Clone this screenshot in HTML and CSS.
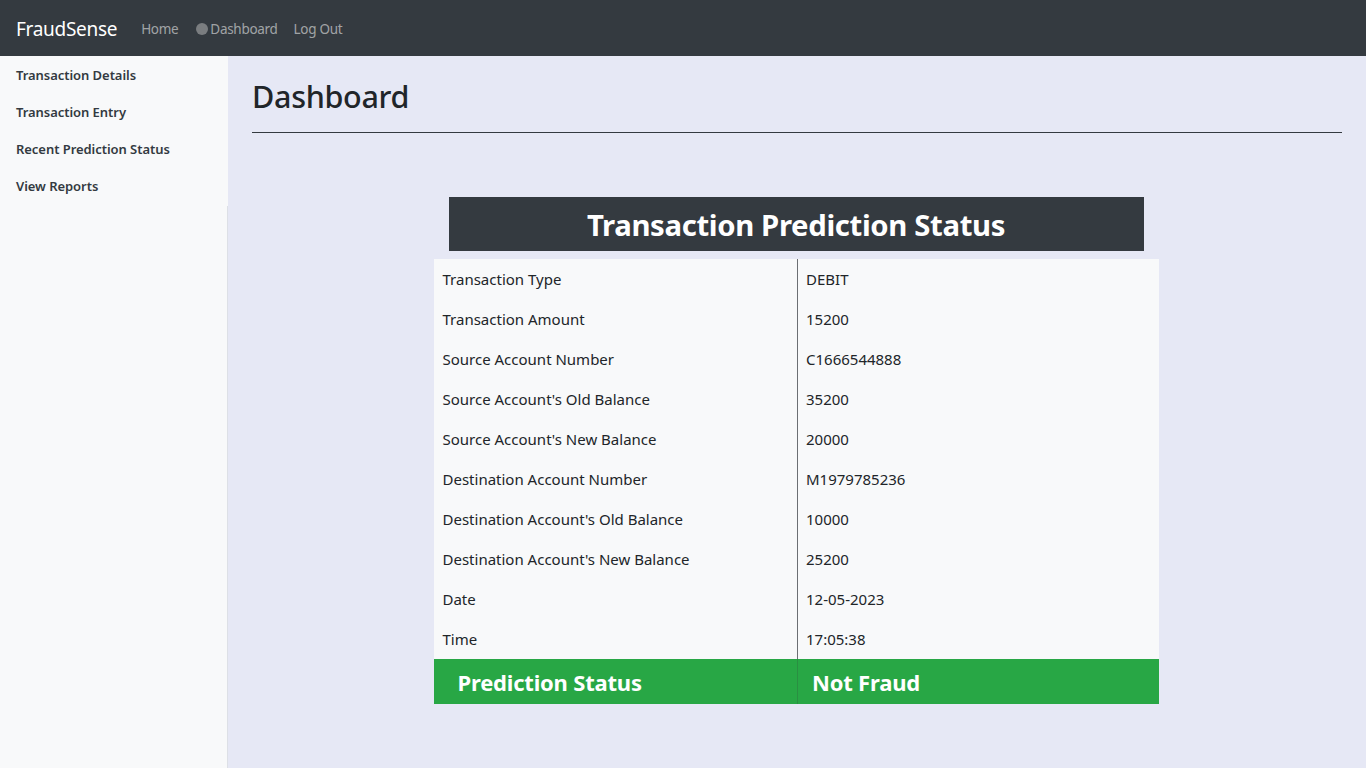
FILE: index.html
```html
<!DOCTYPE html>
<html lang="en">
<head>
<meta charset="utf-8">
<title>FraudSense - Dashboard</title>
<link rel="stylesheet" href="styles.css">
</head>
<body>
<header class="navbar">
  <a class="brand" href="#">FraudSense</a>
  <nav class="nav">
    <a class="nav-link" href="#">Home</a>
    <a class="nav-link active" href="#"><span class="dot"></span>Dashboard</a>
    <a class="nav-link" href="#">Log Out</a>
  </nav>
</header>
<div class="layout">
  <aside class="sidebar">
    <ul class="side-menu">
      <li><a href="#">Transaction Details</a></li>
      <li><a href="#">Transaction Entry</a></li>
      <li><a href="#">Recent Prediction Status</a></li>
      <li><a href="#">View Reports</a></li>
    </ul>
    <div class="side-fill"></div>
  </aside>
  <main class="content">
    <h1 class="page-title">Dashboard</h1>
    <hr class="rule">
    <section class="status">
      <h2 class="status-title">Transaction Prediction Status</h2>
      <table class="status-table">
        <tbody>
          <tr><td>Transaction Type</td><td>DEBIT</td></tr>
          <tr><td>Transaction Amount</td><td>15200</td></tr>
          <tr><td>Source Account Number</td><td>C1666544888</td></tr>
          <tr><td>Source Account's Old Balance</td><td>35200</td></tr>
          <tr><td>Source Account's New Balance</td><td>20000</td></tr>
          <tr><td>Destination Account Number</td><td>M1979785236</td></tr>
          <tr><td>Destination Account's Old Balance</td><td>10000</td></tr>
          <tr><td>Destination Account's New Balance</td><td>25200</td></tr>
          <tr><td>Date</td><td>12-05-2023</td></tr>
          <tr><td>Time</td><td>17:05:38</td></tr>
          <tr class="result"><td>Prediction Status</td><td>Not Fraud</td></tr>
        </tbody>
      </table>
    </section>
  </main>
</div>
</body>
</html>
```

FILE: styles.css
```css
* { box-sizing: border-box; }
html, body { margin: 0; height: 100%; }
body {
  font-family: "Noto Sans", "Open Sans", "DejaVu Sans", sans-serif;
  color: #212529;
  background: #e6e8f5;
  display: flex;
  flex-direction: column;
  min-height: 768px;
}
a { text-decoration: none; }

.navbar {
  height: 56px;
  background: #343a40;
  display: flex;
  align-items: center;
  padding: 1px 16px 0;
  flex-shrink: 0;
}
.brand {
  color: #fff;
  font-size: 19px;
  margin-right: 24px;
  letter-spacing: -0.3px;
}
.nav { display: flex; align-items: center; }
.nav-link {
  color: rgba(255,255,255,0.55);
  font-size: 13.5px;
  display: flex;
  align-items: center;
  letter-spacing: -0.3px;
}
.nav-link + .nav-link { margin-left: 18px; }
.nav-link:last-child { margin-left: 16px; }
.dot {
  width: 12px; height: 12px; border-radius: 50%;
  background: #7a7d80;
  margin-right: 2px;
  display: inline-block;
}

.layout { flex: 1; display: flex; }
.sidebar {
  width: 228px;
  background: #f8f9fa;
  display: flex;
  flex-direction: column;
  flex-shrink: 0;
}
.side-menu { list-style: none; margin: 0; padding: 1px 0 0; }
.side-menu li a {
  display: block;
  padding: 8px 16px;
  height: 37px;
  line-height: 21px;
  font-size: 13px;
  font-weight: 600;
  color: #333a41;
  letter-spacing: -0.05px;
}
.side-fill { flex: 1; border-right: 1px solid #dde0e6; margin-top: 1px; }

.content {
  flex: 1;
  padding: 0 24px;
  display: flex;
  flex-direction: column;
}
.page-title {
  margin: 20px 0 0;
  font-size: 30.5px;
  font-weight: 500;
  line-height: 40px;
  color: #212529;
  letter-spacing: -0.3px;
}
.rule {
  margin: 16px 0 0;
  border: 0;
  border-top: 1px solid #343a40;
  height: 0;
}
.status {
  margin-top: 64px;
  display: flex;
  flex-direction: column;
  align-items: center;
  transform: translateX(-1px);
}
.status-title {
  margin: 0;
  width: 695px;
  height: 54px;
  background: #343a40;
  color: #fff;
  font-size: 29.3px;
  font-weight: 700;
  text-align: center;
  line-height: 56px;
  letter-spacing: -0.35px;
}
.status-table {
  margin-top: 8px;
  width: 725px;
  table-layout: fixed;
  border-collapse: collapse;
  background: #f8f9fa;
  font-size: 15px;
  color: #212529;
}
.status-table td {
  height: 40px;
  padding: 0 8px 0 8px;
  vertical-align: middle;
}
.status-table td:first-child { border-right: 1px solid #6c6f73; width: 364px; padding-left: 9px; }
.status-table .result td {
  background: #28a745;
  color: #fff;
  font-size: 22px;
  font-weight: 700;
  height: 45px;
  padding: 0 14px;
  border-right-color: #2a8f42;
  letter-spacing: -0.2px;
}
.status-table .result td:first-child { padding-left: 24px; }
```
